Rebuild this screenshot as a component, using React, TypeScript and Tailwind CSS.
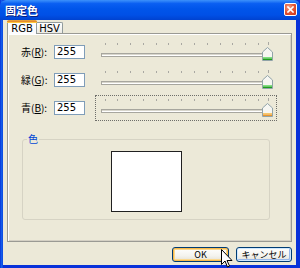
import React from "react";

const JP = '"Noto Sans CJK JP", "DejaVu Sans", sans-serif';
const LAT = '"DejaVu Sans", "Noto Sans CJK JP", sans-serif';

const TICKS = [0, 20, 40, 60, 80, 100, 120, 140, 160, 180, 200, 220, 240, 255];

function Slider({ focused, hot }: { focused?: boolean; hot?: boolean }) {
  const x0 = 9.5;
  const span = 163;
  return (
    <div
      className={
        "w-[182px] h-[26px] " +
        (focused ? "border border-dotted border-[#6e6e6a]" : "border border-transparent")
      }
    >
      <svg width="180" height="24" viewBox="1 1 180 24" className="block">
        {TICKS.map((v) => {
          const x = Math.round(x0 + (v * span) / 255) + 0.5;
          return (
            <line
              key={v}
              x1={x}
              x2={x}
              y1={v === 255 ? 3 : 4}
              y2={6}
              stroke="#a9a8a2"
              strokeWidth={1}
            />
          );
        })}
        <rect x="6.5" y="14.5" width="166" height="3" fill="#ffffff" stroke="#a7a69e" />
        <line x1="7" x2="172" y1="15.5" y2="15.5" stroke="#d8d6cc" />
        <g transform="translate(167,8)">
          <path
            d="M0.5 5 L5.5 0.5 L10.5 5 L10.5 13.5 L0.5 13.5 Z"
            fill="#f6f6f2"
            stroke="#91a3a8"
          />
          <rect x="1" y="10" width="9" height="1.5" fill={hot ? "#f9c86a" : "#7fe07f"} />
          <rect x="1" y="11.5" width="9" height="1.5" fill={hot ? "#e8962c" : "#1e9e1e"} />
        </g>
      </svg>
    </div>
  );
}

function Row({ label, letter, focused }: { label: string; letter: string; focused?: boolean }) {
  return (
    <div className="flex items-center h-[26px]">
      <div
        className="w-[33px] pl-[13px] box-content text-[10px] leading-none text-black whitespace-nowrap"
        style={{ fontFamily: JP }}
      >
        {label}(<span className="underline">{letter}</span>):
      </div>
      <div
        className="w-[31px] h-[14px] border border-[#7f9db9] bg-white flex items-center pl-[2px] text-[10px] leading-none text-black"
        style={{ fontFamily: LAT }}
      >
        255
      </div>
      <div className="ml-[10px]">
        <Slider focused={focused} hot={focused} />
      </div>
    </div>
  );
}

function XpButton({ children, def, w }: { children: React.ReactNode; def?: boolean; w: string }) {
  return (
    <div
      className={
        w +
        " h-[15px] rounded-[3px] border border-[#003c74] bg-[linear-gradient(180deg,#ffffff_0%,#f4f3ee_60%,#e3e0d5_100%)] flex items-center justify-center text-[9px] leading-none text-black " +
        (def ? "shadow-[inset_0_0_0_1px_#f7b94c,inset_0_0_0_2px_#fcd98e]" : "shadow-[inset_0_0_0_1px_#cee7ff,inset_-1px_-1px_0_1px_#98b8ea]")
      }
      style={{ fontFamily: JP }}
    >
      {children}
    </div>
  );
}

export default function App() {
  return (
    <div className="w-[300px] h-[268px] relative overflow-hidden flex flex-col bg-[linear-gradient(90deg,#0831d9_0px,#166aee_2px,#0831d9_3px)]">
      {/* Title bar */}
      <div className="h-[20px] shrink-0 relative rounded-t-[6px] bg-[linear-gradient(180deg,#3d92fb_0%,#0a5ff2_18%,#0055ea_45%,#0050e6_75%,#0042d0_100%)] flex items-center">
        <span
          className="ml-[5px] text-white font-bold text-[11px] leading-none [text-shadow:1px_1px_0_#0a1f80]"
          style={{ fontFamily: JP }}
        >
          固定色
        </span>
        <div className="absolute left-[284px] top-[3px] w-[13px] h-[13px] rounded-[2px] border border-white bg-[radial-gradient(circle_at_35%_30%,#f29b84_0%,#e2512f_55%,#c8341c_100%)] flex items-center justify-center">
          <svg width="7" height="7" viewBox="0 0 7 7">
            <path d="M1 1 L6 6 M6 1 L1 6" stroke="#fff" strokeWidth="1.6" strokeLinecap="square" />
          </svg>
        </div>
      </div>

      {/* Body */}
      <div className="flex-1 ml-[3px] mr-[4px] mb-[3px] bg-[#ece9d8] flex flex-col pl-[4px] pr-[4px]">
        {/* Tabs */}
        <div className="h-[14px] pt-[1px] flex items-end relative z-10 -mb-[1px]">
          <div
            className="w-[30px] h-[13px] relative border-x border-[#919b9c] bg-[#fcfcfe] flex items-center justify-center text-[10px] leading-none text-black pt-[2px]"
            style={{ fontFamily: LAT }}
          >
            <div className="absolute -left-px -right-px top-[-1px] h-[3px] rounded-t-[2px] bg-[#e68b2c] border-t border-[#e5a03c] shadow-[inset_0_-1px_0_#ffc73c]" />
            RGB
          </div>
          <div
            className="w-[26px] h-[11px] mb-[1px] border-t border-r border-[#919b9c] rounded-tr-[2px] bg-[linear-gradient(180deg,#ffffff,#ecebe5)] flex items-center justify-center text-[10px] leading-none text-black pt-[1px]"
            style={{ fontFamily: LAT }}
          >
            HSV
          </div>
        </div>

        {/* Panel */}
        <div className="h-[209px] border border-[#9a9a94] shadow-[inset_1px_1px_0_#ffffff,inset_-1px_-1px_0_#d4d0c4] bg-[#ece9d8] flex flex-col pt-[5px]">
          <div className="flex flex-col gap-[2px]">
            <Row label="赤" letter="R" />
            <Row label="緑" letter="G" />
            <Row label="青" letter="B" focused />
          </div>

          <div className="ml-[14px] mt-[18px] w-[248px] h-[81px] relative rounded-[3px] border border-[#d6d3c4] flex justify-center pt-[11px]">
            <span
              className="absolute left-[4px] top-[-6px] px-[1px] bg-[#ece9d8] text-[10px] leading-none text-[#0046d5]"
              style={{ fontFamily: JP }}
            >
              色
            </span>
            <div className="w-[71px] h-[61px] bg-white border border-[#202020]" />
          </div>
        </div>

        {/* Buttons */}
        <div className="mt-[5px] flex justify-end gap-[7px]">
          <XpButton def w="w-[57px]">OK</XpButton>
          <XpButton w="w-[56px]">キャンセル</XpButton>
        </div>
      </div>

      {/* Cursor */}
      <svg
        className="absolute left-[221px] top-[249px]"
        width="12"
        height="19"
        viewBox="0 0 12 19"
      >
        <path
          d="M0.5 0.5 L0.5 15.5 L4 12 L6.5 18 L8.5 17 L6 11.5 L11 11.5 Z"
          fill="#ffffff"
          stroke="#000000"
          strokeWidth="1"
          strokeLinejoin="miter"
        />
      </svg>
    </div>
  );
}
